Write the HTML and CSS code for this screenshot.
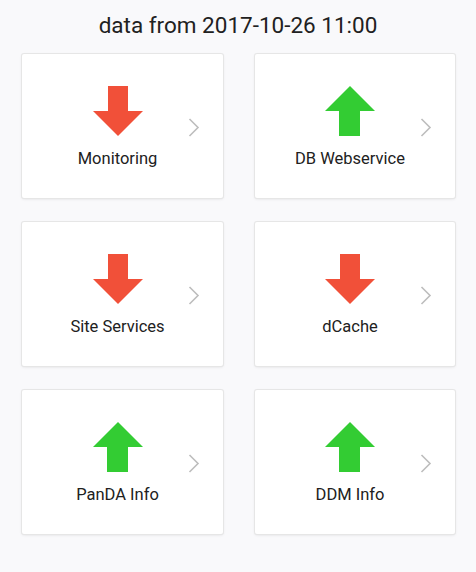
FILE: index.html
```html
<!DOCTYPE html>
<html>
<head>
<meta charset="utf-8">
<link rel="stylesheet" href="styles.css">
</head>
<body>
<div class="page">
  <h1 class="title">data from 2017-10-26 11:00</h1>
  <div class="grid">
    <div class="card">
      <div class="content">
        <svg class="arrow" width="50" height="50" viewBox="0 0 50 50"><polygon class="down" points="15,0 35,0 35,25 50,25 25,50 0,25 15,25"/></svg>
        <div class="label">Monitoring</div>
      </div>
      <svg class="chev" width="12" height="19" viewBox="0 0 12 19"><polyline points="1.5,1 10,9.5 1.5,18"/></svg>
    </div>
    <div class="card">
      <div class="content">
        <svg class="arrow" width="50" height="50" viewBox="0 0 50 50"><polygon class="up" points="25,0 50,25 35,25 35,50 14,50 14,25 0,25"/></svg>
        <div class="label">DB Webservice</div>
      </div>
      <svg class="chev" width="12" height="19" viewBox="0 0 12 19"><polyline points="1.5,1 10,9.5 1.5,18"/></svg>
    </div>
    <div class="card">
      <div class="content">
        <svg class="arrow" width="50" height="50" viewBox="0 0 50 50"><polygon class="down" points="15,0 35,0 35,25 50,25 25,50 0,25 15,25"/></svg>
        <div class="label">Site Services</div>
      </div>
      <svg class="chev" width="12" height="19" viewBox="0 0 12 19"><polyline points="1.5,1 10,9.5 1.5,18"/></svg>
    </div>
    <div class="card">
      <div class="content">
        <svg class="arrow" width="50" height="50" viewBox="0 0 50 50"><polygon class="down" points="15,0 35,0 35,25 50,25 25,50 0,25 15,25"/></svg>
        <div class="label">dCache</div>
      </div>
      <svg class="chev" width="12" height="19" viewBox="0 0 12 19"><polyline points="1.5,1 10,9.5 1.5,18"/></svg>
    </div>
    <div class="card">
      <div class="content">
        <svg class="arrow" width="50" height="50" viewBox="0 0 50 50"><polygon class="up" points="25,0 50,25 35,25 35,50 14,50 14,25 0,25"/></svg>
        <div class="label">PanDA Info</div>
      </div>
      <svg class="chev" width="12" height="19" viewBox="0 0 12 19"><polyline points="1.5,1 10,9.5 1.5,18"/></svg>
    </div>
    <div class="card">
      <div class="content">
        <svg class="arrow" width="50" height="50" viewBox="0 0 50 50"><polygon class="up" points="25,0 50,25 35,25 35,50 14,50 14,25 0,25"/></svg>
        <div class="label">DDM Info</div>
      </div>
      <svg class="chev" width="12" height="19" viewBox="0 0 12 19"><polyline points="1.5,1 10,9.5 1.5,18"/></svg>
    </div>
  </div>
</div>
</body>
</html>
```
FILE: styles.css
```css
html, body {
  margin: 0;
  padding: 0;
  background: #f9f9fb;
}
body {
  font-family: Roboto, "Liberation Sans", sans-serif;
  color: #212121;
  width: 476px;
  height: 572px;
}
.page {
  padding: 12px 22px 0 22px;
}
.title {
  margin: 0 0 16px 0;
  font-size: 22.5px;
  font-weight: 400;
  line-height: 26px;
  text-align: center;
}
.grid {
  display: grid;
  grid-template-columns: 201px 200px;
  column-gap: 32px;
  row-gap: 24px;
}
.card {
  position: relative;
  height: 144px;
  background: #fff;
  border-radius: 2px;
  box-shadow: 0 0 0 1px #e6e6e6, 0 1px 3px rgba(0,0,0,0.12);
  display: flex;
  padding-right: 10px;
}
.content {
  flex: 1;
  display: flex;
  flex-direction: column;
  align-items: center;
  padding-top: 32px;
}
.arrow {
  display: block;
  margin-bottom: 13px;
}
.down { fill: #f15039; }
.up { fill: #33cc33; }
.label {
  font-size: 16.5px;
  line-height: 20px;
}
.chev {
  position: absolute;
  right: 23px;
  top: 64px;
}
.chev polyline {
  fill: none;
  stroke: #bdbdbd;
  stroke-width: 1.6;
}
```
